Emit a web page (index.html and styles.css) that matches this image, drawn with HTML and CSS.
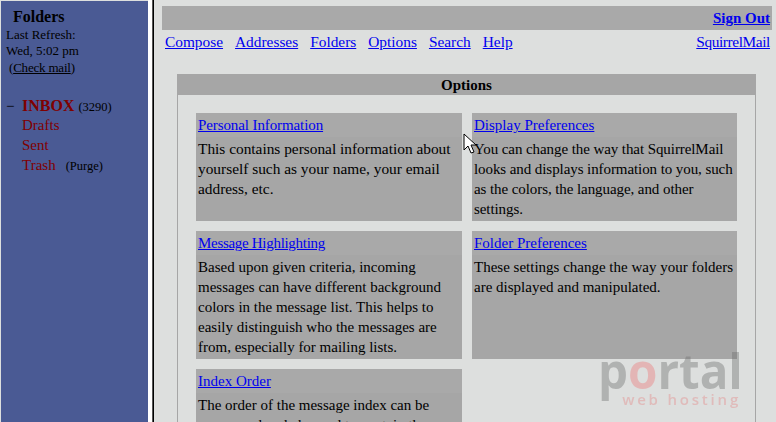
FILE: index.html
```html
<!DOCTYPE html>
<html lang="en">
<head>
<meta charset="utf-8">
<title>Options</title>
<link rel="stylesheet" href="styles.css">
</head>
<body>
<div class="page">
  <aside class="sidebar">
    <h1 class="folders-title">Folders</h1>
    <div class="refresh">Last Refresh:<br>Wed, 5:02 pm</div>
    <div class="check">(<a href="#">Check mail</a>)</div>
    <ul class="folder-list">
      <li class="folder folder-inbox"><span class="toggle">&minus;</span><a class="inbox" href="#">INBOX</a> <small class="note">(3290)</small></li>
      <li class="folder"><span class="toggle"></span><a href="#">Drafts</a></li>
      <li class="folder"><span class="toggle"></span><a href="#">Sent</a></li>
      <li class="folder"><span class="toggle"></span><a href="#">Trash</a><small class="note purge">(Purge)</small></li>
    </ul>
  </aside>
  <div class="divider"></div>
  <main class="main">
    <div class="topbar"><a class="signout" href="#">Sign Out</a></div>
    <nav class="nav">
      <div class="nav-links">
        <a href="#">Compose</a><a href="#">Addresses</a><a href="#">Folders</a><a href="#">Options</a><a href="#">Search</a><a href="#">Help</a>
      </div>
      <a class="brand" href="#">SquirrelMail</a>
    </nav>
    <section class="options">
      <h2 class="options-title">Options</h2>
      <div class="options-grid">
        <article class="card">
          <div class="card-title card-title-snug"><a href="#">Personal Information</a></div>
          <p class="card-text card-text-wide">This contains personal information about yourself such as your name, your email address, etc.</p>
        </article>
        <article class="card">
          <div class="card-title"><a href="#">Display Preferences</a></div>
          <p class="card-text card-text-snug">You can change the way that SquirrelMail looks and displays information to you, such as the colors, the language, and other settings.</p>
        </article>
        <article class="card">
          <div class="card-title card-title-tight"><a href="#">Message Highlighting</a></div>
          <p class="card-text">Based upon given criteria, incoming messages can have different background colors in the message list. This helps to easily distinguish who the messages are from, especially for mailing lists.</p>
        </article>
        <article class="card">
          <div class="card-title"><a href="#">Folder Preferences</a></div>
          <p class="card-text">These settings change the way your folders are displayed and manipulated.</p>
        </article>
        <article class="card">
          <div class="card-title"><a href="#">Index Order</a></div>
          <p class="card-text">The order of the message index can be rearranged and changed to contain the headers in any order you want.</p>
        </article>
      </div>
    </section>
  </main>
  <div class="watermark"><div class="wm-logo">p<span class="wm-o">o</span>rtal</div><div class="wm-sub">web hosting</div></div>
  <svg class="cursor" width="14" height="22" viewBox="0 0 14 22"><path d="M1 1v16l4-4 3 7 3-1-3-7h5z" fill="#fff" stroke="#000" stroke-width="1"/></svg>
</div>
</body>
</html>
```
FILE: styles.css
```css
* { box-sizing: border-box; }
html, body { margin: 0; height: 100%; overflow: hidden; }
body { background: #dddfde; font-family: "Liberation Serif", serif; font-size: 15px; color: #000; }
.page { position: relative; display: flex; width: 776px; height: 422px; overflow: hidden; padding-top: 1px; }
a { color: #0000ee; }
.sidebar { width: 147px; margin-left: 1px; flex: none; background: #4a5a94; color: #000; font-size: 13px; padding: 6px 0 0 5px; }
.folders-title { margin: 0 0 0 7px; font-size: 16px; line-height: 19px; }
.refresh { line-height: 16px; margin-top: 1px; }
.check { line-height: 17px; margin-left: 3px; letter-spacing: -.2px; }
.check a { color: #000; }
.folder-list { list-style: none; margin: 20px 0 0; padding: 0; }
.folder { display: flex; align-items: baseline; height: 20px; line-height: 20px; font-size: 15px; }
.folder-inbox { height: 19px; }
.folder a { color: #800000; text-decoration: none; }
.toggle { width: 16px; flex: none; }
.inbox { font-weight: bold; font-size: 16px; }
.note { font-size: 12.5px; margin-left: 4px; }
.purge { margin-left: 10px; }
.divider { width: 6px; flex: none; background: linear-gradient(to right, #fff 0 4px, #555 4px 5px, #000 5px 6px); margin-top: -1px; }
.main { flex: 1; min-width: 0; padding: 5px 4px 0 8px; }
.topbar { background: #a9a9a9; height: 24px; display: flex; justify-content: flex-end; align-items: center; padding: 0 2px 0 0; }
.signout { font-weight: bold; font-size: 15px; }
.nav { display: flex; justify-content: space-between; padding: 2px 2px 0 3px; line-height: 20px; font-size: 15.36px; }
.nav-links { display: flex; gap: 12px; }
.brand { letter-spacing: -.4px; }
.options { margin: 22px 16px 0 15px; border: 1px solid #a6a6a6; border-top: 0; }
.options-title { margin: 0; background: #a6a6a6; height: 21px; line-height: 23px; text-align: center; font-size: 15px; }
.options-grid { display: grid; grid-template-columns: 266px 265px; gap: 10px; padding: 18px 18px 0; align-items: stretch; }
.card { background: #a6a6a6; padding-bottom: 2px; }
.card-title { background: #a9a9a9; height: 24px; line-height: 24px; padding: 0 2px; }
.card-title-snug { letter-spacing: -.1px; }
.card-title-tight { letter-spacing: -.3px; }
.card-text { margin: 0; padding: 2px 2px 0; line-height: 20px; }
.card-text-wide { font-size: 15.36px; }
.card-text-snug { letter-spacing: -.08px; }
.watermark { position: absolute; left: 598px; top: 351px; width: 146px; pointer-events: none; filter: blur(.5px); }
.wm-logo { font-family: "Open Sans", sans-serif; font-weight: 700; font-size: 47.5px; line-height: 40px; color: rgba(110,110,110,.4); }
.wm-o { color: rgba(235,130,130,.45); }
.wm-sub { font-family: "Open Sans", sans-serif; font-weight: 600; font-size: 15px; line-height: 17px; letter-spacing: 2.8px; padding-right: 3px; color: rgba(230,130,130,.38); text-align: right; }
.cursor { position: absolute; left: 463px; top: 133px; }
```
